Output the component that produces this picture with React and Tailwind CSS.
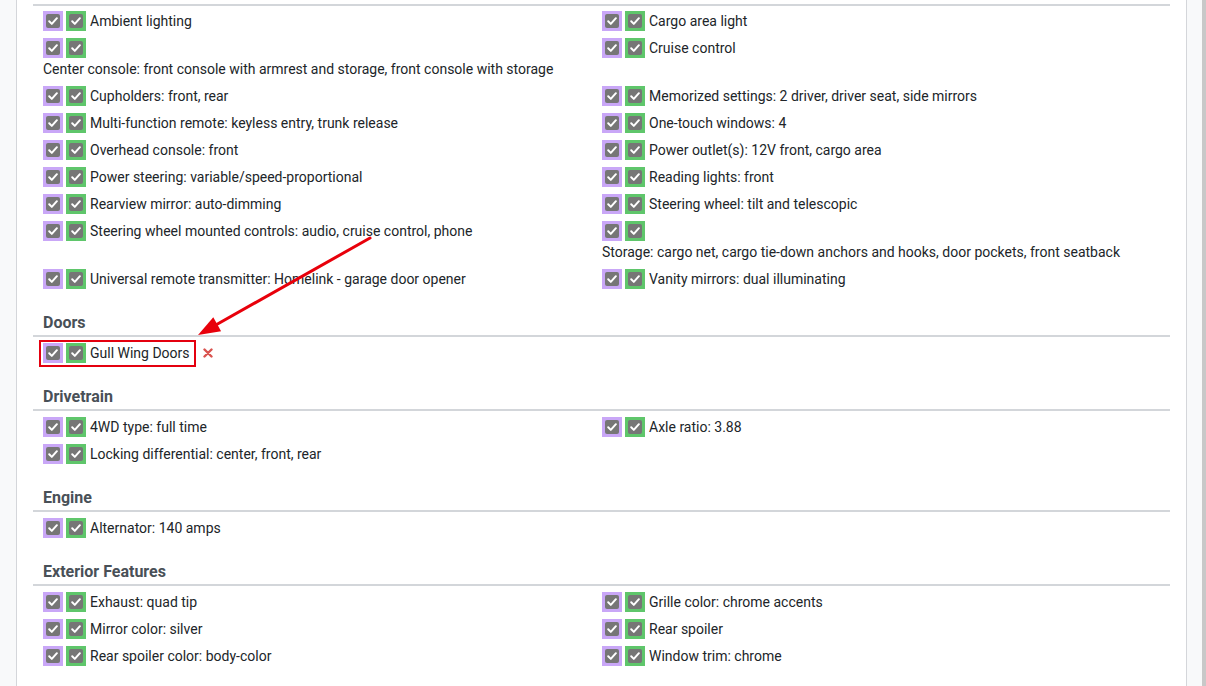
import React from 'react';

const sections = [
  {
    title: null,
    items: [
      ['Ambient lighting'],
      ['Cargo area light'],
      ['Center console: front console with armrest and storage, front console with storage', true],
      ['Cruise control'],
      ['Cupholders: front, rear'],
      ['Memorized settings: 2 driver, driver seat, side mirrors'],
      ['Multi-function remote: keyless entry, trunk release'],
      ['One-touch windows: 4'],
      ['Overhead console: front'],
      ['Power outlet(s): 12V front, cargo area'],
      ['Power steering: variable/speed-proportional'],
      ['Reading lights: front'],
      ['Rearview mirror: auto-dimming'],
      ['Steering wheel: tilt and telescopic'],
      ['Steering wheel mounted controls: audio, cruise control, phone'],
      ['Storage: cargo net, cargo tie-down anchors and hooks, door pockets, front seatback', true],
      ['Universal remote transmitter: Homelink - garage door opener'],
      ['Vanity mirrors: dual illuminating'],
    ],
  },
  { title: 'Doors', items: [['Gull Wing Doors', false, true]] },
  {
    title: 'Drivetrain',
    items: [['4WD type: full time'], ['Axle ratio: 3.88'], ['Locking differential: center, front, rear']],
  },
  { title: 'Engine', items: [['Alternator: 140 amps']] },
  {
    title: 'Exterior Features',
    items: [
      ['Exhaust: quad tip'],
      ['Grille color: chrome accents'],
      ['Mirror color: silver'],
      ['Rear spoiler'],
      ['Rear spoiler color: body-color'],
      ['Window trim: chrome'],
    ],
  },
];

const Check = ({ bg }) => (
  <span className={`w-[20px] h-[20px] p-[3px] flex ${bg}`}>
    <svg viewBox="0 0 14 14" className="w-[14px] h-[14px]">
      <rect width="14" height="14" rx="2" fill="#767676" />
      <path d="M3.2 7.3 L5.8 9.9 L10.9 4.2" fill="none" stroke="#fff" strokeWidth="2" strokeLinecap="round" strokeLinejoin="round" />
    </svg>
  </span>
);

const Boxes = () => (
  <span className="inline-flex items-center gap-[3px] mr-[4px] h-[21px]">
    <Check bg="bg-[#c9a7f7]" />
    <Check bg="bg-[#5fc66b]" />
  </span>
);

const Item = ({ label, wrap, marked }) => {
  if (wrap) {
    return (
      <div className="py-[3px] leading-[21px]">
        <div className="flex items-center h-[21px]">
          <Boxes />
        </div>
        <div>{label}</div>
      </div>
    );
  }
  if (marked) {
    return (
      <div className="py-[3px] leading-[21px] flex items-center">
        <div className="relative flex items-center">
          <Boxes />
          <span>{label}</span>
          <span className="absolute -left-[4px] -right-[6px] -top-[3px] -bottom-[3px] border-2 border-[#e4000f]" />
        </div>
        <svg viewBox="0 0 10 10" className="w-[10px] h-[10px] ml-[13px]">
          <path d="M1.5 1.5 L8.5 8.5 M8.5 1.5 L1.5 8.5" stroke="#d9534f" strokeWidth="2.4" strokeLinecap="round" />
        </svg>
      </div>
    );
  }
  return (
    <div className="py-[3px] leading-[21px] flex items-center">
      <Boxes />
      <span>{label}</span>
    </div>
  );
};

const App = () => {
  return (
    <div
      className="relative flex h-[686px] overflow-hidden bg-[#f8f9fa] text-[14px] text-[#212529]"
      style={{ fontFamily: 'Roboto, "Liberation Sans", sans-serif' }}
    >
      <div className="w-[16px] shrink-0" />
      <div className="flex-1 bg-white border-x border-[#d4d6da] px-[16px] pt-[4px]">
        {sections.map((section, i) => (
          <div key={i}>
            {section.title ? (
              <div className="mt-[18.5px] h-[26px] leading-[24px] border-b-2 border-[#d3d6da] pl-[10px] text-[16px] font-bold text-[#495057]">
                {section.title}
              </div>
            ) : (
              <div className="border-t-2 border-[#d3d6da]" />
            )}
            <div className={`grid grid-cols-[559px_559px] pl-[10px] items-start ${section.title ? 'mt-[2.5px]' : 'mt-[1.5px]'}`}>
              {section.items.map(([label, wrap, marked]) => (
                <Item key={label} label={label} wrap={wrap} marked={marked} />
              ))}
            </div>
          </div>
        ))}
      </div>
      <div className="w-[15px] shrink-0" />
      <div className="w-[4px] shrink-0 bg-[#c8c8c8]" />

      <svg className="absolute inset-0 pointer-events-none" width="1206" height="686">
        <line x1="370" y1="238" x2="214" y2="326" stroke="#e8000b" strokeWidth="3" strokeLinecap="round" />
        <polygon points="198,335 221.1,331.2 213.3,317.2" fill="#e8000b" />
      </svg>
    </div>
  );
};

export default App;
